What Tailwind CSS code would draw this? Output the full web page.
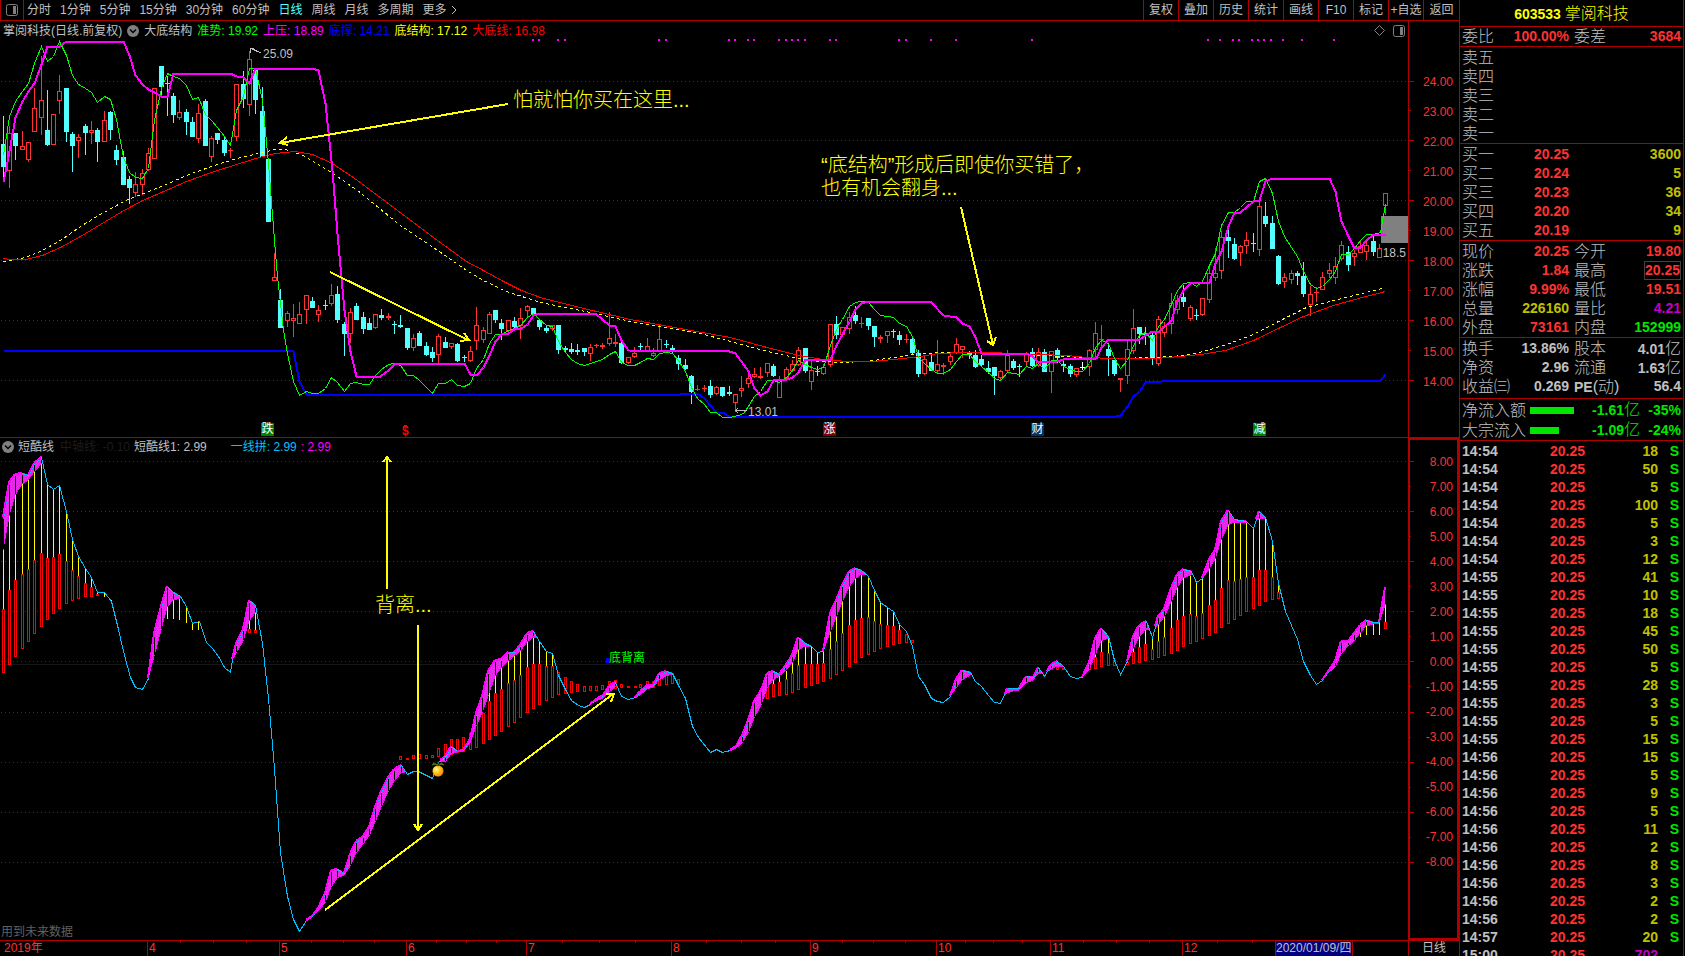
<!DOCTYPE html>
<html lang="zh-CN">
<head>
    <meta charset="UTF-8">
    <meta name="viewport" content="width=device-width, initial-scale=1.0">
    <title>603533 掌阅科技 - 日线</title>
    <script src="https://cdn.jsdelivr.net/npm/@tailwindcss/browser@4"></script>
</head>
<body class="bg-black text-[#c0c0c0] font-['Liberation_Sans','Noto_Sans_CJK_SC',sans-serif] text-xs">
  <div class="flex h-screen overflow-hidden">
    <!-- Charts -->
    <main class="flex-1 min-w-0 flex flex-col">
      <!-- Toolbar -->
      <header class="h-[21px] shrink-0 border-b border-[#b00000] flex justify-between leading-5 whitespace-nowrap">
        <nav class="flex items-center gap-[9px]">
          <button class="w-6 h-full -mr-1.5 border-x border-[#b00000] flex items-center justify-center" aria-label="侧栏">
            <svg width="12" height="12" viewBox="0 0 12 12"><rect x="0.5" y="0.5" width="11" height="11" rx="2" fill="none" stroke="#808080"/><rect x="7" y="2" width="3" height="8" fill="#808080"/></svg>
          </button>
          <button>分时</button>
          <button>1分钟</button>
          <button>5分钟</button>
          <button>15分钟</button>
          <button>30分钟</button>
          <button>60分钟</button>
          <button class="text-[#54ffff]">日线</button>
          <button>周线</button>
          <button>月线</button>
          <button>多周期</button>
          <button class="flex items-center gap-1">更多 <svg width="6" height="10" viewBox="0 0 6 10"><path d="M1 1 L5 5 L1 9" fill="none" stroke="#c0c0c0"/></svg></button>
        </nav>
        <nav class="flex">
          <button class="w-[35px] border-l border-[#b00000]">复权</button>
          <button class="w-[35px] border-l border-[#b00000]">叠加</button>
          <button class="w-[35px] border-l border-[#b00000]">历史</button>
          <button class="w-[35px] border-l border-[#b00000]">统计</button>
          <button class="w-[35px] border-l border-[#b00000]">画线</button>
          <button class="w-[35px] border-l border-[#b00000]">F10</button>
          <button class="w-[35px] border-l border-[#b00000]">标记</button>
          <button class="w-[35px] border-l border-[#b00000]">+自选</button>
          <button class="w-[36px] border-l border-[#b00000]">返回</button>
        </nav>
      </header>

      <!-- Price panel -->
      <section class="relative h-[417px] shrink-0 border-b border-[#b00000] flex">
        <svg id="price" class="absolute inset-0 w-full h-full" viewBox="0 21 1459 416" preserveAspectRatio="none" shape-rendering="crispEdges"></svg>
        <div class="relative flex-1">
          <div class="flex items-center gap-[5px] h-[19px] pl-[3px] whitespace-nowrap">
            <span>掌阅科技(日线.前复权)</span>
            <button aria-label="指标"><svg width="12" height="12" viewBox="0 0 12 12"><circle cx="6" cy="6" r="6" fill="#808080"/><path d="M3 4.500 L6 7.500 L9 4.500" fill="none" stroke="#000" stroke-width="1.500"/></svg></button>
            <span>大底结构</span>
            <span class="text-[#00ff00]">准势: 19.92</span>
            <span class="text-[#ff00ff]">上压: 18.89</span>
            <span class="text-[#0000ff]">底撑: 14.21</span>
            <span class="text-[#ffff00]">底结构: 17.12</span>
            <span class="text-[#ff0000]">大底线: 16.98</span>
            <div class="ml-auto mr-[3px] flex items-center gap-2">
              <svg width="11" height="11" viewBox="0 0 11 11"><path d="M5.500 0.500 L10.500 5.500 L5.500 10.500 L0.500 5.500 Z" fill="none" stroke="#808080"/></svg>
              <svg width="12" height="12" viewBox="0 0 12 12"><rect x="0.500" y="0.500" width="11" height="11" rx="2" fill="none" stroke="#808080"/><rect x="7" y="2" width="3" height="8" fill="#808080"/></svg>
            </div>
          </div>
          <span class="absolute left-[263px] top-[25px]">25.09</span>
          <span class="absolute left-[748px] top-[383px]">13.01</span>
          <span class="absolute right-[2px] top-[224px]">18.5</span>
          <p class="absolute left-[513px] top-[68px] text-[20px] leading-[23px] font-light text-[#ffff00]">怕就怕你买在这里...</p>
          <p class="absolute left-[821px] top-[133px] text-[20px] leading-[23px] font-light text-[#ffff00]">“底结构”形成后即使你买错了，<br>也有机会翻身...</p>
          <span class="absolute left-[261px] top-[402px] w-[13px] h-[13px] bg-[#008000] text-white leading-[13px] text-center">跌</span>
          <span class="absolute left-[402px] top-[403px] w-2 text-[#ff0000] leading-[15px] font-bold">$</span>
          <span class="absolute left-[823px] top-[402px] w-[13px] h-[13px] bg-[#800000] text-white leading-[13px] text-center">涨</span>
          <span class="absolute left-[1031px] top-[402px] w-[13px] h-[13px] bg-[#003366] text-white leading-[13px] text-center">财</span>
          <span class="absolute left-[1253px] top-[402px] w-[13px] h-[13px] bg-[#008000] text-white leading-[13px] text-center">减</span>
        </div>
        <div class="relative w-[51px] border-l border-[#b00000] pt-[46px] pr-[6px] text-right text-[#ff3232] leading-[30px]">
          <div>24.00</div><div>23.00</div><div>22.00</div><div>21.00</div><div>20.00</div><div>19.00</div>
          <div>18.00</div><div>17.00</div><div>16.00</div><div>15.00</div><div>14.00</div>
        </div>
      </section>

      <!-- Indicator panel -->
      <section class="relative flex-1 min-h-0 flex">
        <svg id="indicator" class="absolute inset-0 w-full h-full" viewBox="0 438 1459 502" preserveAspectRatio="none" shape-rendering="crispEdges"></svg>
        <div class="relative flex-1">
          <div class="flex items-center h-[17px] pl-0.5 whitespace-nowrap">
            <button class="mr-1" aria-label="指标"><svg width="12" height="12" viewBox="0 0 12 12"><circle cx="6" cy="6" r="6" fill="#808080"/><path d="M3 4.500 L6 7.500 L9 4.500" fill="none" stroke="#000" stroke-width="1.500"/></svg></button>
            <span>短酷线</span>
            <span class="ml-1.5 text-[#1c1c1c]">中轴线: -0.10</span>
            <span class="ml-1">短酷线1: 2.99</span>
            <span class="ml-6 text-[#00c0ff]">一线拼: 2.99</span>
            <span class="ml-1 text-[#ff00ff]">: 2.99</span>
          </div>
          <p class="absolute left-[375px] top-[156px] text-[20px] leading-[23px] font-light text-[#ffff00]">背离...</p>
          <span class="absolute left-[609px] top-[212px] leading-4 text-[#00ff00]">底背离</span>
          <span class="absolute left-px bottom-0 leading-4 text-[#606060]">用到未来数据</span>
          <!-- Fruit marker -->
          <svg class="absolute left-[432px] top-[322px]" width="13" height="17" viewBox="0 0 13 17">
            <defs><radialGradient id="fruit" cx="0.35" cy="0.35" r="0.7"><stop offset="0" stop-color="#ffffa0"/><stop offset="0.4" stop-color="#ffd020"/><stop offset="1" stop-color="#ff8000"/></radialGradient></defs>
            <circle cx="6" cy="11" r="5.500" fill="url(#fruit)"/>
            <path d="M6 6 Q2 1 0 5 Q3 3 6 6 Q9 1 12 5 Q9 3 6 6" fill="#4a7010" stroke="#4a7010"/>
            <path d="M6 6 L6 1" stroke="#503010" fill="none"/>
          </svg>
        </div>
        <div class="relative w-[51px] border-2 border-[#b00000] pt-[10px] pr-1 text-right text-[#ff3232] leading-[25px]">
          <div>8.00</div><div>7.00</div><div>6.00</div><div>5.00</div><div>4.00</div><div>3.00</div><div>2.00</div><div>1.00</div><div>0.00</div>
          <div>-1.00</div><div>-2.00</div><div>-3.00</div><div>-4.00</div><div>-5.00</div><div>-6.00</div><div>-7.00</div><div>-8.00</div>
        </div>
      </section>

      <!-- Time axis -->
      <footer class="relative h-4 shrink-0 border-t border-[#b00000] flex leading-[15px] text-[#ff3232] whitespace-nowrap">
        <svg id="months" class="absolute inset-0 w-full h-1" viewBox="0 0 1459 4" preserveAspectRatio="none" shape-rendering="crispEdges"></svg>
        <div class="grow-143 basis-0 pl-1">2019年</div>
        <div class="grow-130 basis-0 border-l border-[#b00000] pl-px">4</div>
        <div class="grow-125 basis-0 border-l border-[#b00000] pl-px">5</div>
        <div class="grow-118 basis-0 border-l border-[#b00000] pl-px">6</div>
        <div class="grow-143 basis-0 border-l border-[#b00000] pl-px">7</div>
        <div class="grow-137 basis-0 border-l border-[#b00000] pl-px">8</div>
        <div class="grow-124 basis-0 border-l border-[#b00000] pl-px">9</div>
        <div class="grow-112 basis-0 border-l border-[#b00000] pl-px">10</div>
        <div class="grow-130 basis-0 border-l border-[#b00000] pl-px">11</div>
        <div class="grow-91 basis-0 border-l border-[#b00000] pl-px">12</div>
        <div class="grow-76 basis-0 border-x border-[#b00000] bg-[#000080] text-[#c0c0c0]">2020/01/09/四</div>
        <div class="grow-55 basis-0"></div>
        <div class="w-[51px] border-l border-[#b00000] text-center text-[#c0c0c0]">日线</div>
      </footer>
    </main>

    <!-- Quote panel -->
    <aside class="w-[225px] mr-px shrink-0 border-x border-[#b00000] text-sm font-bold leading-[19px] whitespace-nowrap">
      <h1 class="h-[26px] leading-[27px] text-center text-[#ffff00]">603533 <span class="text-base/[27px] font-light">掌阅科技</span></h1>
      <div class="h-5 border-t border-[#b00000] grid grid-cols-[107px_1fr] gap-x-[5px] px-0.5">
        <div class="flex justify-between"><span class="text-base/[19px] font-light">委比</span><span class="text-[#ff3232]">100.00%</span></div>
        <div class="flex justify-between"><span class="text-base/[19px] font-light">委差</span><span class="text-[#ff3232]">3684</span></div>
      </div>
      <table id="asks" class="w-full pt-px border-t border-[#b00000] border-separate border-spacing-0"></table>
      <table id="bids" class="w-full pt-px border-t border-[#b00000] border-separate border-spacing-0"></table>
      <div id="quote" class="h-[97px] pt-px border-t border-[#b00000] grid grid-cols-[107px_1fr] auto-rows-[19px] gap-x-[5px] px-0.5"></div>
      <div id="finance" class="h-[61px] pt-px border-t border-[#b00000] grid grid-cols-[107px_1fr] auto-rows-[19px] gap-x-[5px] px-0.5"></div>
      <div class="h-[42px] pt-px border-t border-[#b00000] px-0.5 text-[#00e600]">
        <div class="flex items-center">
          <span class="w-[68px] text-base/[19px] font-light text-[#c0c0c0]">净流入额</span>
          <span class="w-11 h-[7px] bg-[#00e600]"></span>
          <span class="flex-1 text-right">-1.61<span class="text-base/[19px] font-light">亿</span></span>
          <span class="w-[41px] text-right">-35%</span>
        </div>
        <div class="flex items-center">
          <span class="w-[68px] text-base/[19px] font-light text-[#c0c0c0]">大宗流入</span>
          <span class="w-[29px] h-[7px] bg-[#00e600]"></span>
          <span class="flex-1 text-right">-1.09<span class="text-base/[19px] font-light">亿</span></span>
          <span class="w-[41px] text-right">-24%</span>
        </div>
      </div>
      <table id="ticks" class="w-full pt-px border-t border-[#b00000] border-separate border-spacing-0 leading-[18px]"></table>
    </aside>
  </div>

  <script>
    // ---- Quote panel ----
    const asks = ['五', '四', '三', '二', '一'];
    document.getElementById('asks').innerHTML = asks.map(n =>
      `<tr><th class="h-[19px] p-0 pl-0.5 text-left text-base/[19px] font-light">卖${n}</th><td></td><td></td></tr>`).join('');

    const bids = [['一', '20.25', '3600'], ['二', '20.24', '5'], ['三', '20.23', '36'], ['四', '20.20', '34'], ['五', '20.19', '9']];
    document.getElementById('bids').innerHTML = bids.map(([n, price, vol]) =>
      `<tr><th class="h-[19px] p-0 pl-0.5 text-left text-base/[19px] font-light">买${n}</th><td class="w-[60px] p-0 text-right text-[#ff3232]">${price}</td><td class="w-[114px] p-0 pr-0.5 text-right text-[#c0c000]">${vol}</td></tr>`).join('');

    const RED = 'text-[#ff3232]', YELLOW = 'text-[#c0c000]', PINK = 'text-[#c000c0]', GREEN = 'text-[#00e600]', GREY = 'text-[#c0c0c0]';
    function cells(rows) {
      return rows.map(([label, value, color, box]) => {
        const v = value.replace('亿', '<span class="text-base/[19px] font-light">亿</span>');
        const l = label.replace('PE', '<span class="text-sm font-bold">PE</span>');
        return `<div class="flex justify-between"><span class="text-base/[19px] font-light">${l}</span><span class="${color}${box ? ' px-px ring-1 ring-inset ring-[#404040]' : ''}">${v}</span></div>`;
      }).join('');
    }
    document.getElementById('quote').innerHTML = cells([
      ['现价', '20.25', RED], ['今开', '19.80', RED],
      ['涨跌', '1.84', RED], ['最高', '20.25', RED, true],
      ['涨幅', '9.99%', RED], ['最低', '19.51', RED],
      ['总量', '226160', YELLOW], ['量比', '4.21', PINK],
      ['外盘', '73161', RED], ['内盘', '152999', GREEN],
    ]);
    document.getElementById('finance').innerHTML = cells([
      ['换手', '13.86%', GREY], ['股本', '4.01亿', GREY],
      ['净资', '2.96', GREY], ['流通', '1.63亿', GREY],
      ['收益㈢', '0.269', GREY], ['PE(动)', '56.4', GREY],
    ]);

    const ticks = [
      ['14:54', [18, 50, 5, 100, 5, 3, 12]],
      ['14:55', [41, 10, 18, 45, 50, 5, 28, 3, 5, 15]],
      ['14:56', [15, 5, 9, 5, 11, 2, 8, 3, 2, 2]],
      ['14:57', [20]],
      ['15:00', [702]],
    ];
    document.getElementById('ticks').innerHTML = ticks.flatMap(([time, vols]) => vols.map(vol =>
      `<tr><td class="h-[18px] p-0 pl-0.5">${time}</td><td class="w-[70px] p-0 text-right text-[#ff3232]">20.25</td><td class="w-[73px] p-0 text-right ${vol > 500 ? 'text-[#c000c0]' : 'text-[#c0c000]'}">${vol}</td><td class="w-[25px] p-0 pr-1 text-right text-[#00e600]">${vol > 500 ? '' : 'S'}</td></tr>`)).join('');

    // ---- Chart helpers ----
    // Series are stored in sections; each section has an origin and its own units per pixel.
    const SECT = {
      a: [0, 0, 2.8, 3], b: [0, 200, 3, 3], c: [450, 270, 3, 3], d: [900, 150, 3, 3],
      e: [0, 430, 3, 2.98], f: [380, 600, 2.8, 3], g: [810, 550, 3, 3], h: [900, 480, 3, 3],
    };
    const px = (s, x) => Math.floor(SECT[s][0] + x / SECT[s][2]);
    const py = (s, y) => Math.floor(SECT[s][1] + y / SECT[s][3]);
    function points(parts) {
      return Object.entries(parts).map(([s, str]) => str.split(' ').map(p => {
        const [x, y] = p.split(',').map(Number);
        return (px(s, x) + 0.5) + ',' + (py(s, y) + 0.5);
      }).join(' ')).join(' ');
    }
    const rows = str => str.trim().split(/\s*;\s*/).map(r => r.split(' '));
    const line = (parts, color, w, extra = '') => `<polyline points="${points(parts)}" fill="none" stroke="${color}" stroke-width="${w}" ${extra}/>`;
    const rect = (x, y, w, h, fill) => `<rect x="${x}" y="${y}" width="${w}" height="${h}" fill="${fill}"/>`;
    const hollow = (x, y, w, h, color) => `<rect x="${x + 0.5}" y="${y + 0.5}" width="${w - 1}" height="${Math.max(h - 1, 1)}" fill="#000" stroke="${color}"/>`;
    const path = (d, color, w) => `<path d="${d}" fill="none" stroke="${color}" stroke-width="${w}"/>`;
    function grid(first, step, n) {
      let out = '';
      for (let i = 0; i < n; i++) {
        const y = Math.floor(first + i * step) + 0.5;
        if (i % 2 === 0) out += `<path d="M1 ${y} H1408" stroke="#a80000" stroke-dasharray="1 3"/>`;
        out += `<path d="M1409 ${y} h${i % 2 ? 2 : 5}" stroke="#b00000"/>`;
      }
      return out;
    }

    // ---- Price chart ----
    // x, high, low, body top, body bottom, u(p) / d(own) / w(hite, flat)
    const candles = {
      a: `10 348 535 432 503 d;27 380 564 400 515 u;43 400 482 400 440 d;63 393 452 438 452 u;80 427 488 427 482 u;97 266 398 325 398 u;116 170 405 300 356 u;133 270 440 390 435 d;150 343 437 343 437 u;167 225 342 274 304 u;186 264 428 264 396 d;203 396 518 402 440 d;220 402 476 411 425 u;239 372 467 378 399 d;256 363 432 391 401 u;273 384 486 390 428 d;292 333 428 360 428 u;309 333 420 336 392 d;326 435 495 450 480 d;346 453 557 471 557 d;362 528 612 537 566 d;379 516 593 552 580 u;399 509 585 520 557 u;416 444 514 460 512 u;433 265 479 265 479 u;452 198 295 198 261 d;469 228 350 249 254 d;486 280 369 288 345 d;503 300 362 337 356 u;522 328 405 336 366 d;539 352 413 366 413 d;555 313 430 340 418 u;575 297 440 303 440 d;592 408 486 415 473 u;609 399 432 399 420 d;628 408 470 420 461 d;645 444 476 450 452 u;662 253 425 253 412 u;682 213 324 252 297 d;698 155 348 178 317 u;715 205 342 210 300 d;735 262 473 333 473 d;752 475 668 477 668 d`,
      b: `823 160 244 232 244 u;841 268 386 300 384 d;862 333 383 340 365 u;880 312 413 355 364 u;898 306 374 343 374 u;919 286 372 286 332 u;937 292 326 303 324 d;955 315 368 331 347 u;976 300 330 315 317 d;994 252 318 286 314 u;1012 258 371 282 362 d;1033 366 470 372 402 d;1051 324 430 337 404 u;1069 309 362 318 362 d;1090 337 404 351 387 d;1108 354 392 369 390 d;1126 343 388 343 386 u;1144 328 360 345 354 d;1165 340 360 349 355 u;1183 363 404 372 374 d;1201 345 384 375 381 d;1222 384 450 384 444 d;1240 403 455 415 446 u;1258 393 440 399 438 d;1279 426 468 438 465 d;1297 441 486 456 474 d;1315 403 494 409 467 u;1336 411 446 426 444 d;1354 430 449 430 443 u;1372 429 486 432 483 d;1393 465 486 471 474 d;1411 438 486 454 485 u;1429 321 450 376 425 u;1450 381 431 391 422 u;1468 336 404 343 404 u;1486 330 371 330 360 d`,
      c: `154 147 210 159 177 d;175 150 192 151 185 u;193 141 180 153 171 d;211 114 207 145 170 u;232 105 145 109 125 u;250 114 135 114 132 d;268 147 180 150 171 d;289 168 189 174 183 d;307 165 185 167 179 u;325 165 252 165 240 d;346 228 250 236 240 d;364 219 253 238 246 d;382 222 255 240 246 d;403 234 258 234 246 d;421 222 273 232 254 u;439 223 236 226 230 u;457 219 238 226 233 u;478 128 230 205 224 u;496 192 232 217 224 u;514 215 282 219 279 d;535 262 282 262 281 u;553 231 264 249 263 u;571 219 245 228 232 d;592 204 248 229 243 u;610 234 262 249 260 u;628 162 245 208 243 u;649 210 236 222 226 d;667 225 250 236 240 d;685 255 300 264 282 d;706 267 300 285 297 d;724 315 402 318 366 d;742 346 365 357 360 u;763 345 368 356 359 u;781 330 384 348 375 d;799 350 377 352 374 u;817 351 381 351 380 d;838 348 378 366 372 d;856 372 428 373 401 u;874 318 383 355 364 u;895 310 354 325 343 u;913 294 325 313 322 u;931 291 329 319 325 u;952 280 321 280 310 u;970 282 321 288 318 d;988 318 386 330 385 u;1009 291 330 298 326 u;1027 270 308 283 304 u;1045 231 290 241 286 u;1066 234 309 234 303 d;1084 270 360 301 338 u;1102 290 318 303 308 d;1120 283 315 292 314 u;1141 163 292 163 286 u;1159 138 207 162 195 d;1177 172 200 172 196 u;1198 126 192 142 179 u;1216 108 162 135 153 d;1234 141 174 161 164 u;1255 144 180 144 168 d;1273 168 231 168 201 d;1291 195 219 202 208 u;1312 184 221 184 200 u;1330 177 204 183 186 d;1348 183 225 195 210 d;1369 192 219 207 209 u;1387 201 255 207 249 d;1405 240 321 249 312 d;1423 258 315 268 314 u;1444 252 303 276 303 d;1462 210 312 283 305 u;1480 279 315 286 292 u`,
      d: `151 608 645 620 637 u;169 564 612 583 609 u;187 588 626 590 600 u;208 603 628 608 616 d;226 600 654 615 651 d;244 615 648 627 645 d;265 633 672 654 666 d;283 651 735 651 678 d;301 660 690 664 685 u;322 602 668 616 664 u;340 627 660 633 654 d;358 642 682 648 653 d;379 606 648 613 638 u;397 594 651 608 648 d;415 594 651 608 649 u;433 598 668 608 668 d;454 604 729 604 667 u;472 594 640 600 625 d;490 630 668 642 648 d;511 642 681 648 672 d;529 654 681 655 677 u;547 636 660 651 653 w;568 598 678 602 653 u;586 516 626 550 602 u;604 525 600 568 570 u;625 584 678 597 618 d;643 630 678 630 674 d;661 685 726 685 692 u;682 570 702 598 680 u;700 477 614 535 604 u;718 531 582 531 552 d;736 531 585 552 556 d;757 545 645 555 624 d;775 498 648 508 644 u;793 516 563 529 550 u;814 429 554 460 524 u;832 437 492 451 482 u;850 405 473 441 456 d;871 467 515 472 509 u;889 477 510 495 498 d;907 445 500 445 497 u;928 345 461 371 452 u;946 294 393 370 385 u;964 243 388 262 364 u;985 240 324 261 273 d;1003 264 332 282 327 d;1021 285 350 290 311 u;1039 246 312 271 290 u;1060 249 308 279 282 d;1078 152 318 169 301 u;1096 156 231 198 222 d;1117 198 299 219 297 d;1135 315 407 318 402 d;1153 370 416 382 398 u;1174 360 402 370 392 u;1192 363 405 369 378 d;1210 336 441 378 432 d;1231 408 500 433 466 u;1249 411 456 427 430 u;1267 366 422 382 422 u;1288 339 386 361 374 u;1306 321 402 349 385 u;1324 273 335 286 328 u;1345 288 363 306 345 d;1363 300 348 310 323 u;1381 270 310 290 310 u;1399 267 330 286 308 u;1420 255 318 273 308 d;1438 282 326 295 325 u;1456 130 195 130 170 u`,
    };
    const CANDLE = { u: '#ff3232', d: '#54ffff', w: '#ffffff' };

    const green = {
      a: '10,465 27,350 43,305 63,275 80,250 97,190 116,138 133,183 150,168 167,125 186,165 203,225 220,253 239,266 256,276 273,307 292,289 309,298 326,357 346,471 362,516 379,532 399,536 416,505 433,362 452,265 469,219 486,229 503,235 522,257 539,299 555,291 575,342 592,360 609,382 628,410 645,436 662,330 682,290 698,205 715,206 735,300 752,490',
      b: '824,120 833,230 841,310 850,390 862,460 880,545 898,585 919,575 937,580 955,580 976,566 994,533 1012,547 1033,574 1051,549 1069,546 1090,553 1108,553 1126,525 1144,507 1165,492 1183,490 1201,495 1222,526 1240,527 1258,542 1297,580 1315,550 1336,549 1354,539 1372,555 1393,559 1411,550 1429,505 1450,477 1468,430 1486,403',
      c: '154,192 175,180 193,175 211,166 232,141 250,131 268,148 289,166 307,169 325,215 346,247 364,267 382,280 403,286 421,281 439,274 457,268 478,252 496,245 514,276 535,285 553,286 571,278 592,266 610,267 628,249 649,247 667,250 685,271 706,303 724,352 742,384 763,404 781,426 799,428 817,441 838,441 865,436 880,430 895,408 913,380 931,365 952,332 970,330 988,337 1009,322 1027,300 1045,270 1066,283 1084,291 1102,299 1120,292 1141,225 1159,178 1177,148 1198,110 1216,97 1234,94 1255,97 1273,119 1291,135 1312,139 1330,142 1348,160 1369,170 1387,200 1405,262 1423,280 1444,299 1462,309 1480,310',
      d: '151,658 169,634 187,613 208,612 226,635 244,650 265,666 283,685 301,692 322,668 340,669 358,674 379,650 397,656 415,640 433,658 454,632 472,630 490,648 511,659 529,664 547,664 568,640 586,592 604,570 625,580 643,625 661,656 682,630 700,585 718,555 736,547 757,570 775,530 793,508 814,462 832,422 850,401 871,397 889,408 907,395 928,345 946,310 964,225 985,187 1003,187 1021,172 1039,155 1060,154 1078,93 1096,85 1117,130 1135,215 1153,260 1174,292 1192,318 1210,365 1231,402 1249,416 1267,410 1288,388 1306,365 1324,314 1345,314 1363,295 1381,270 1399,253 1420,253 1440,248 1456,163',
    };
    const magenta = {
      a: '10,548 27,455 43,352 63,305 80,274 97,250 116,193 133,138 167,138 186,125 346,125 362,165 379,225 399,254 416,269 433,278 452,288 469,288 486,219 645,219 662,229 682,232 698,250 715,204 875,204 892,210 912,310 930,510',
      b: '1012,100 1033,330 1051,455 1069,530 1140,530 1165,510 1183,492 1201,489 1393,489 1411,524 1432,524 1450,502 1468,465 1486,425',
      c: '154,193 175,191 193,177 215,176 232,163 250,136 268,129 436,129 478,167 496,170 514,210 535,242 838,243 856,249 874,274 895,303 913,355 931,377 952,363 970,330 1012,329 1027,322 1045,307 1066,269 1141,269 1159,225 1177,193 1198,155 1216,118 1234,99 1255,93 1423,93',
      d: '94,457 130,497 169,501 187,520 208,529 226,562 244,611 385,612 397,619 415,636 472,635 490,627 590,626 604,592 625,567 718,567 736,556 757,543 778,543 814,511 832,455 850,420 871,400 889,396 928,396 946,340 964,303 985,230 1003,187 1021,186 1060,153 1078,152 1096,95 1117,84 1288,84 1306,125 1324,215 1345,260 1363,294 1381,293 1399,270 1420,253 1456,252',
    };
    const blue = {
      b: '10,450 862,450 880,453 898,545 919,584 1500,584',
      c: '690,374 710,369 742,369 763,386 799,426 817,427 838,440',
      d: '150,800 650,800 661,795 682,768 700,739 718,724 736,696 783,695 800,690 1440,690 1456,674',
    };
    const redLine = {
      b: '10,176 30,178 75,178 126,165 180,143 240,109 300,72 360,38',
      a: '400,600 452,577 522,543 592,516 662,492 735,468 770,459 825,454 875,462 930,489 1000,540 1080,605',
      c: '-39,-88 50,-26 100,0 160,35 215,62 270,83 340,100 440,124 540,148 640,165 740,183 840,203 940,230 1045,256 1120,267 1190,274 1270,275 1330,268',
      d: '60,618 115,611 190,608 260,607 350,610 420,614 500,617 560,621 640,625 770,625 840,620 900,612 975,600 1060,571 1140,533 1210,499 1300,465 1375,445 1456,424',
    };
    const yellowLine = {
      b: '10,184 75,172 126,150 180,120 240,80 300,43',
      a: '350,600 452,560 522,527 592,499 662,476 735,457 770,449 800,449 850,467 920,510 1000,570',
      c: '-150,-135 -50,-67 50,0 100,30 170,65 270,97 420,128 540,154 640,173 740,188 840,215 940,240 1045,266 1100,273 1190,277 1270,272 1330,263',
      d: '60,610 150,607 260,608 380,614 480,618 560,623 640,626 770,623 850,615 910,603 980,583 1060,552 1140,510 1220,472 1300,450 1375,433 1456,411',
    };

    let svg = grid(81, 29.9, 11);
    svg += rect(1381, 216, 27, 27, '#808080');
    for (const [s, str] of Object.entries(candles)) {
      for (const [x, hi, lo, top, bot, dir] of rows(str)) {
        const cx = px(s, +x), y1 = py(s, +top), h = Math.max(py(s, +bot) - y1, 1);
        svg += rect(cx, py(s, +hi), 1, py(s, +lo) - py(s, +hi), CANDLE[dir]);
        svg += dir === 'u' && h > 2 ? hollow(cx - 2, y1, 5, h, CANDLE.u) : rect(cx - 2, y1, 5, h, CANDLE[dir]);
      }
    }
    svg += line(yellowLine, '#ffff00', 1, 'stroke-dasharray="3 3"');
    svg += line(redLine, '#ff0000', 1);
    svg += line(blue, '#0000ff', 2);
    svg += line(green, '#00ff00', 1);
    svg += line(magenta, '#ff00ff', 2);
    for (const x of [533, 539, 558, 565, 659, 666, 729, 735, 748, 754, 779, 786, 792, 798, 805, 830, 836, 899, 906, 931, 956, 1032, 1208, 1220, 1233, 1239, 1252, 1258, 1264, 1271, 1283, 1302, 1334])
      svg += rect(x - 1, 39, 2, 2, '#ff00ff');
    // High / low pointers
    svg += path('M250 48 L261 53 M250 48 h4 M250 48 v5', '#c0c0c0', 1);
    svg += path('M735 410.5 h12 M735 410 l3 3 M735 411 l3 -3', '#c0c0c0', 1);
    // Small hat over the $ marker
    svg += rect(404, 425, 3, 1, '#ff0000') + rect(403, 426, 5, 1, '#ff0000');
    // Drawn arrows
    svg += path('M508 104 L280 143 M287 137 L280 143 L288 145', '#ffff00', 2);
    svg += path('M330 272 L468 340 M464 333 L469 340 L460 341', '#ffff00', 2);
    svg += path('M961 207 L993 345 M987 341 L993 345 L996 337', '#ffff00', 2);
    document.getElementById('price').innerHTML = svg;

    // ---- Indicator chart ----
    const cyan = {
      e: '10,260 27,155 43,133 67,129 85,136 103,100 125,82 142,163 161,178 178,165 200,242 217,325 235,378 256,412 275,440 293,484 313,485 334,512 355,595 370,660 390,737 405,766 427,773 445,740 463,605 484,525 502,467 520,485 541,497 559,527 577,576 597,571 619,632 637,652 655,675 672,708 691,724 697,685 709,635 730,595 748,508 766,522 788,635 805,800 823,1010 841,1260 862,1390 880,1460 898,1494 919,1462 937,1450 955,1425 976,1380 994,1314 1012,1310 1033,1321 1051,1265 1069,1226 1090,1210 1108,1186 1126,1125 1144,1078 1165,1035 1183,1013 1203,1001 1222,1028 1240,1018 1255,1019 1297,1040 1315,990 1336,975',
      f: '201,440 217,455 235,452 253,418 270,340 288,288 305,213 323,180 340,179 360,157 377,158 394,137 412,99 430,95 447,125 466,155 483,160 500,225 519,268 537,300 555,315 572,322 590,312 606,299 625,286 642,260 658,247 676,290 695,298 714,293 730,275 749,257 766,256 783,220 801,215 819,221 836,257 856,295 875,378 893,412 925,457 942,448 960,457 980,451 997,440 1014,405 1031,360 1049,305 1067,270 1084,219 1102,215 1118,223 1136,200 1155,165 1173,113 1190,130 1208,138',
      g: '22,307 40,303 61,190 79,150 97,105 118,65 136,54 154,60 175,78 193,120 211,157 232,172 250,185 268,222',
      h: '19,455 37,500 55,590 73,614 94,655 112,663 130,667 151,648 169,598 187,571 210,576 226,604 244,620 265,645 283,667 301,670 322,626 358,626 379,589 400,592 415,562 433,589 454,552 472,545 490,560 511,589 529,596 547,592 568,548 586,475 604,446 626,470 643,540 661,583 682,545 700,468 718,435 738,425 757,472 775,410 793,387 814,325 832,283 850,269 873,274 889,307 907,295 928,238 946,210 964,125 985,91 1003,118 1040,125 1060,145 1078,95 1096,113 1117,185 1135,310 1156,395 1192,478 1210,545 1231,587 1249,612 1267,600 1306,545 1324,485 1345,484 1363,460 1381,435 1399,422 1420,428 1438,428 1456,322',
    };
    // Rising bands: x, top, bottom
    const bands = [
      ['e', '10 260 360;27 155 258;46 133 195;67 129 162;85 136 150;103 100 127;125 82 103'],
      ['e', '445 740 742;463 605 675;484 525 598;502 467 530;520 485 508;541 497 503'],
      ['e', '697 685 688;709 635 665;730 595 630;748 508 570;766 522 548'],
      ['e', '919 1462 1465;937 1450 1453;955 1425 1436;976 1380 1412;994 1314 1364;1012 1310 1337;1033 1321 1328;1051 1265 1300;1069 1226 1262;1090 1210 1236;1108 1186 1212;1126 1125 1170;1144 1078 1126;1165 1035 1080;1183 1013 1048;1203 1001 1025;1217 1018 1022'],
      ['f', '170 480 483;183 470 488;201 440 463;217 455 457;235 452 455;253 418 430;270 340 378;288 288 340;305 213 290;323 180 230;340 179 205;360 157 185;377 158 170;394 137 155;412 99 128;430 95 112;438 110 113'],
      ['f', '590 312 314;606 299 305;625 286 295;642 260 278;658 247 262'],
      ['f', '714 293 295;730 275 285;749 257 268;766 256 262;783 220 240;801 215 228;819 221 223'],
      ['f', '980 451 453;997 440 446;1014 405 430;1031 360 400;1049 305 355;1067 270 315;1084 219 265;1102 215 240;1118 223 230;1136 200 215;1155 165 190;1173 113 150;1190 130 138;1208 138 139'],
      ['g', '40 303 305;61 190 248;79 150 203;97 105 158;118 65 112;136 54 87;154 60 74;168 73 74'],
      ['h', '151 648 650;169 598 626;187 571 600;210 576 586'],
      ['h', '315 643 645;322 626 640;340 626 634;358 626 630;379 589 610;400 592 600;415 562 580;430 582 584'],
      ['h', '442 575 577;454 552 567;472 545 558;488 558 560'],
      ['h', '547 592 593;568 548 570;586 475 525;604 446 485;626 470 476'],
      ['h', '682 545 547;700 468 508;718 435 473;738 425 447;746 445 449'],
      ['h', '766 440 443;775 410 435;793 387 412;814 325 368;832 283 325;850 269 296;873 274 286'],
      ['h', '907 295 297;928 238 268;946 210 238;964 125 182;985 91 136;1003 120 128;1040 125 127'],
      ['h', '1070 118 122;1078 95 117;1096 113 114'],
      ['h', '1267 600 602;1288 572 576;1306 545 562;1324 485 523;1345 484 500;1363 460 483;1381 435 460;1399 422 438;1420 428 432;1438 428 430;1456 322 376'],
    ];
    // x, stick top, box top, box bottom (0 = part not drawn)
    const sticks = {
      e: '10 360 535 722;28 258 478 700;46 195 448 676;67 162 430 652;85 150 415 630;103 127 389 606;125 103 368 585;142 163 383 565;161 178 380 548;178 170 371 532;200 242 392 517;217 325 418 508;235 378 438 502;256 412 457 496;275 440 469 496;293 486 491 494;313 485 500 0;334 508 512 0;502 530 566 0;520 508 566 0;538 503 568 0;559 527 577 0;577 576 596 0;595 571 596 0;748 570 594 603;766 548 597 603;1201 0 973 982;1222 0 978 981;1240 0 970 978;1258 0 967 979;1279 0 970 978;1297 0 970 976;1315 0 949 973;1336 0 937 970',
      f: '200 0 418 463;217 0 418 457;235 0 412 455;253 0 400 448;270 0 367 443;290 0 340 430;306 278 304 418;323 230 280 406;340 205 268 394;360 185 250 380;377 170 240 367;394 155 226 352;412 128 202 337;430 112 193 325;447 125 193 314;466 155 199 301;483 160 199 292;500 0 217 283;519 0 232 280;537 0 244 277;553 0 253 274;572 0 258 274;590 0 259 272;606 0 258 271;623 0 255 268;642 0 244 265;659 0 241 264;676 0 253 262;695 0 259 262;714 0 259 262;730 0 253 262;749 0 244 258;766 0 244 262;783 0 232 256;801 0 226 253;819 0 221 250;836 0 238 250;1067 0 286 298;1085 0 262 295;1102 240 253 290;1118 230 248 286;1138 213 238 283;1155 190 220 277;1171 150 196 268;1191 138 193 262;1208 138 193 256;1226 157 193 250;1242 153 190 244',
      g: '61 248 298 385;79 203 274 373;97 158 250 361;118 112 226 349;136 87 211 337;154 74 205 322;175 80 202 313;193 122 214 304;211 158 223 295;232 173 226 290;250 187 229 283;268 220 241 280;288 0 253 277;307 0 271 277',
      h: '454 0 564 568;472 0 562 568;490 0 565 569;568 0 562 568;586 525 532 565;604 485 517 559;626 476 520 556;643 0 541 556;682 0 547 552;700 508 517 550;718 473 502 547;736 447 493 541;757 472 508 538;775 435 484 532;793 412 472 526;814 368 445 520;832 325 421 511;850 296 409 499;871 286 403 490;889 307 409 484;907 297 400 475;928 268 376 466;946 238 361 457;964 182 325 442;985 136 301 430;1003 128 304 418;1021 126 298 406;1039 126 292 394;1060 145 292 385;1078 117 271 376;1096 113 271 364;1117 190 292 358;1135 318 337 355;1381 460 473 0;1399 438 467 0;1420 432 467 0;1438 430 467 0;1456 376 427 445',
    };

    svg = grid(461, 25.1, 17);
    svg += path('M0 664.5 H1408', '#161616', 1);
    for (const [s, str] of Object.entries(sticks)) {
      for (const [x, y0, y1, y2] of rows(str)) {
        const cx = px(s, +x), top = py(s, +y1);
        if (+y0) svg += rect(cx, py(s, +y0), 1, top - py(s, +y0), '#ffff00');
        if (+y2) svg += hollow(cx - 1, top, 3, py(s, +y2) - top + 1, '#ff0000');
      }
    }
    for (const [s, str] of bands) {
      const r = rows(str).map(v => v.map(Number));
      const top = r.map(([x, a]) => `${px(s, x)},${py(s, a)}`);
      const bot = r.map(([x, , b]) => `${px(s, x)},${py(s, b)}`).reverse();
      svg += `<polygon points="${top.concat(bot).join(' ')}" fill="#e828e8" stroke="#ff00ff"/>`;
      svg += r.filter(([, a, b]) => b - a > 14).map(([x, a, b]) => rect(px(s, x), py(s, a) + 2, 1, py(s, b) - py(s, a) - 3, '#000')).join('');
    }
    svg += line(cyan, '#00c0ff', 1);
    // Top edge of each band stays magenta while the line rises
    for (const [s, str] of bands) {
      const r = rows(str).map(v => v.map(Number));
      for (let i = 1; i < r.length; i++)
        if (r[i][1] < r[i - 1][1]) svg += path(`M${px(s, r[i - 1][0])} ${py(s, r[i - 1][1])} L${px(s, r[i][0])} ${py(s, r[i][1])}`, '#ff00ff', 2);
    }
    svg += rect(606, 658, 4, 5, '#0000ff');
    svg += path('M387 589 V457 M383 462 L387 457 L391 462', '#ffff00', 2);
    svg += path('M418 625 V830 M414 824 L418 830 L422 824', '#ffff00', 2);
    svg += path('M325 910 L613 694 M606 694 L614 694 L611 702', '#ffff00', 2);
    document.getElementById('indicator').innerHTML = svg;

    document.getElementById('months').innerHTML = [180, 213, 246, 311, 343, 374, 436, 466, 496, 562, 599, 635, 706, 741, 775, 842, 873, 905, 965, 993, 1022, 1083, 1116, 1149, 1217, 1252]
      .map(x => rect(x, 0, 1, 2, '#b00000')).join('');
  </script>
</body>
</html>
